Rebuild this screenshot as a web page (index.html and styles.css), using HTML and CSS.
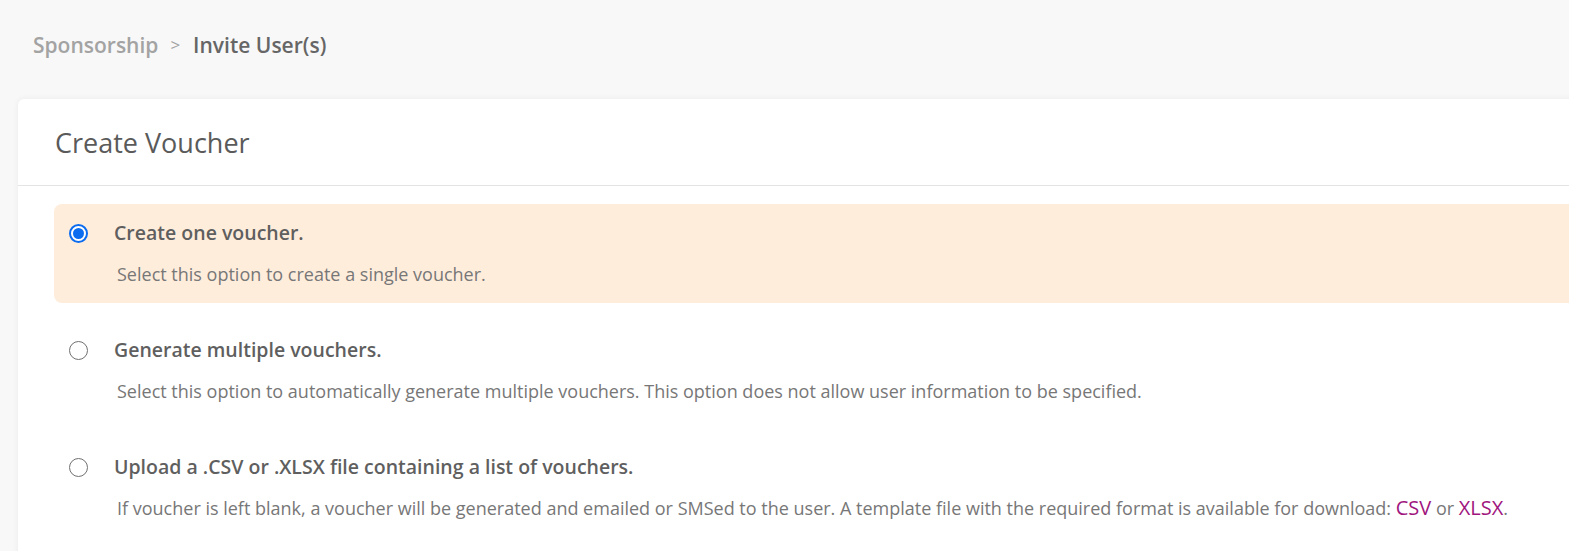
FILE: index.html
```html
<!DOCTYPE html>
<html lang="en">
<head>
<meta charset="utf-8">
<title>Create Voucher</title>
<link rel="stylesheet" href="styles.css">
</head>
<body>
<nav class="breadcrumb">
  <span class="crumb-parent">Sponsorship</span>
  <span class="crumb-sep">&gt;</span>
  <span class="crumb-current">Invite User(s)</span>
</nav>
<section class="card">
  <header class="card-header">Create Voucher</header>
  <div class="card-body">
    <label class="option option-selected">
      <span class="radio radio-checked"></span>
      <span class="option-text">
        <span class="option-title">Create one voucher.</span>
        <span class="option-desc">Select this option to create a single voucher.</span>
      </span>
    </label>
    <label class="option">
      <span class="radio"></span>
      <span class="option-text">
        <span class="option-title">Generate multiple vouchers.</span>
        <span class="option-desc">Select this option to automatically generate multiple vouchers. This option does not allow user information to be specified.</span>
      </span>
    </label>
    <label class="option">
      <span class="radio"></span>
      <span class="option-text">
        <span class="option-title">Upload a .CSV or .XLSX file containing a list of vouchers.</span>
        <span class="option-desc">If voucher is left blank, a voucher will be generated and emailed or SMSed to the user. A template file with the required format is available for download: <a class="link" href="#">CSV</a> or <a class="link" href="#">XLSX</a>.</span>
      </span>
    </label>
  </div>
</section>
</body>
</html>
```

FILE: styles.css
```css
html, body {
  margin: 0;
  padding: 0;
}
body {
  background: #f8f8f8;
  font-family: "Open Sans", "Liberation Sans", sans-serif;
  overflow: hidden;
  width: 1569px;
  height: 551px;
}
.breadcrumb {
  display: flex;
  align-items: center;
  padding: 31px 0 0 33px;
  height: 28px;
  font-size: 21px;
  font-weight: 600;
  line-height: 28px;
}
.crumb-parent {
  color: #a3a3a3;
}
.crumb-sep {
  color: #a3a3a3;
  font-weight: 400;
  font-size: 17px;
  margin: 0 13px 0 12px;
}
.crumb-current {
  color: #666666;
}
.card {
  margin: 40px 0 0 18px;
  width: 1600px;
  background: #ffffff;
  border-radius: 6px;
  box-shadow: 0 0 6px rgba(0, 0, 0, 0.06);
  height: 500px;
}
.card-header {
  height: 86px;
  border-bottom: 1px solid #e4e4e4;
  padding-left: 37px;
  display: flex;
  align-items: center;
  font-size: 27px;
  color: #5a5a5a;
  font-weight: 400;
}
.card-body {
  padding: 18px 0 0 36px;
  display: flex;
  flex-direction: column;
  gap: 18px;
}
.option {
  display: flex;
  align-items: flex-start;
  padding: 17px 14px 17px 15px;
  border-radius: 8px;
  cursor: pointer;
}
.option-selected {
  background: #ffeddc;
}
.radio {
  flex: none;
  box-sizing: border-box;
  width: 19px;
  height: 19px;
  margin-top: 3px;
  border: 1.5px solid #707070;
  border-radius: 50%;
  background: #ffffff;
  position: relative;
}
.radio-checked {
  border: 2px solid #0b6cf0;
}
.radio-checked::after {
  content: "";
  position: absolute;
  left: 2px;
  top: 2px;
  width: 11px;
  height: 11px;
  border-radius: 50%;
  background: #0b6cf0;
}
.option-text {
  display: flex;
  flex-direction: column;
  gap: 17px;
  margin-left: 26px;
}
.option-title {
  font-size: 19.5px;
  font-weight: 600;
  color: #5f5f5f;
  line-height: 24px;
}
.option-desc {
  font-size: 18px;
  color: #777777;
  line-height: 24px;
  padding-left: 3px;
}
.link {
  color: #a0157d;
  font-size: 20px;
  text-decoration: none;
}
```
